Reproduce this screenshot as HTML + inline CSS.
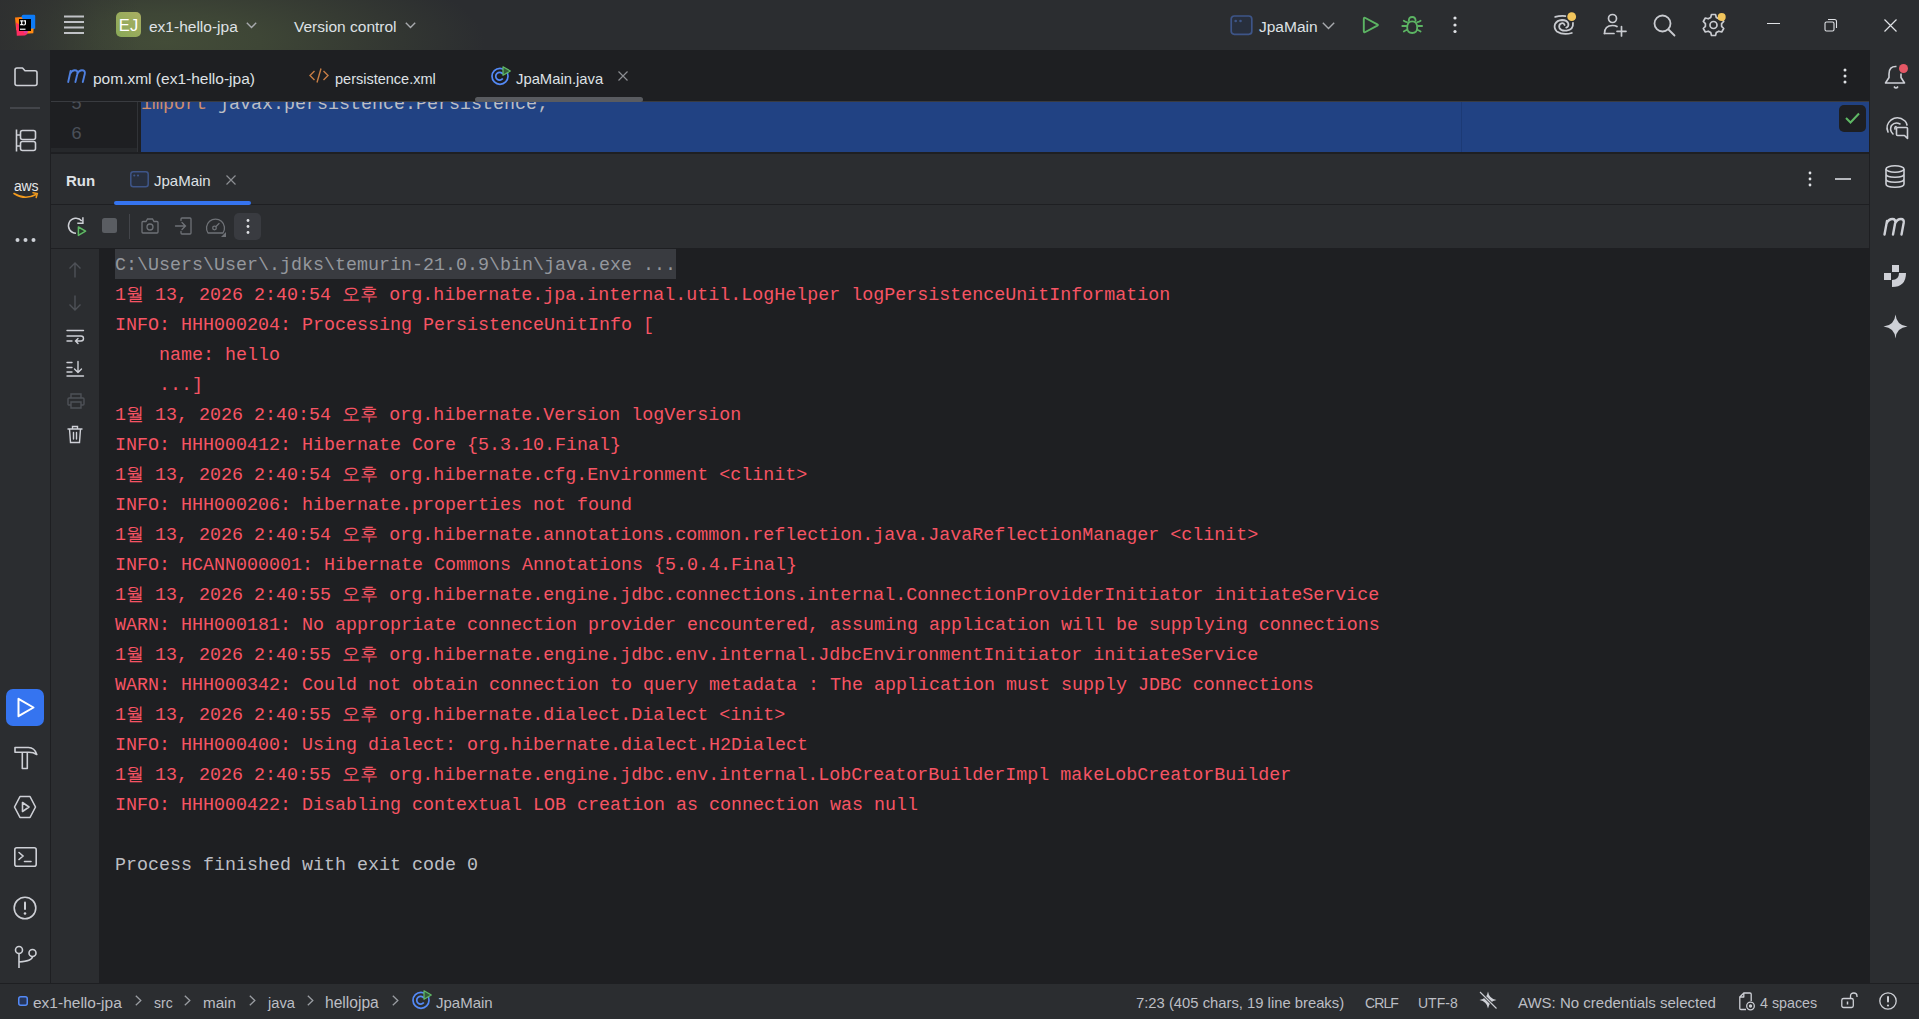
<!DOCTYPE html>
<html><head><meta charset="utf-8">
<style>
*{margin:0;padding:0;box-sizing:border-box}
html,body{width:1919px;height:1019px;overflow:hidden;background:#1E1F22;font-family:"Liberation Sans",sans-serif;color:#DFE1E5}
.a{position:absolute}
svg{position:absolute;overflow:visible}
#title{left:0;top:0;width:1919px;height:50px;background:linear-gradient(to right,rgba(46,47,48,0.92) 0px,rgba(46,47,48,0.6) 50px,rgba(46,47,48,0.2) 100px,rgba(46,47,48,0) 140px),radial-gradient(ellipse 320px 95px at 165px 42px,#434C38 0%,#3E4636 30%,#363B33 60%,#2B2D30 100%)}
.ui{font-size:15.5px;white-space:pre;line-height:20px}
#lstrip{left:0;top:50px;width:51px;height:933px;background:#2B2D30;border-right:1px solid #1E1F22}
#rstrip{left:1869px;top:50px;width:50px;height:933px;background:#2B2D30;border-left:1px solid #1E1F22}
#tabs{left:51px;top:50px;width:1818px;height:52px;background:#1E1F22;border-bottom:1px solid #393B40}
#editor{left:51px;top:102px;width:1818px;height:50px;background:#1E1F22;overflow:hidden}
#runhdr{left:51px;top:153px;width:1818px;height:52px;background:#2B2D30;border-top:1px solid #1E1F22;border-bottom:1px solid #1E1F22}
#runtb{left:51px;top:205px;width:1818px;height:44px;background:#2B2D30;border-bottom:1px solid #1E1F22}
#cgut{left:51px;top:249px;width:48px;height:734px;background:#2B2D30}
#console{left:99px;top:249px;width:1770px;height:734px;background:#1E1F22;overflow:hidden}
#status{left:0;top:983px;width:1919px;height:36px;background:#2B2D30;border-top:1px solid #1E1F22}
.mono{font-family:"Liberation Mono",monospace;font-size:18.333px;line-height:30px;white-space:pre}
.r{color:#F75464}
.k{display:inline-block;width:18.1px;text-align:left}
</style></head><body>
<div id="title" class="a">
<!-- IJ logo -->
<svg style="left:15px;top:15px" width="21" height="21" viewBox="0 0 21 21">
<path d="M6.5 1.5 Q6.8 -0.2 8.5 -0.2 L19 -0.3 Q20.2 -0.3 20.2 1 L20.2 13.5 L15 15.5 L6 7 Z" fill="#0D7BF8"/>
<path d="M0 2.5 L6.5 2 L9 6 L2.5 16 L1.2 15 Z" fill="#FF7F10"/>
<path d="M12 14.5 L18.6 13.2 L18.3 18.3 L10.5 18.8 Z" fill="#FF8A12"/>
<path d="M1 7.5 L9 13 L12.5 19 L10 20.6 L1.8 20.8 Z" fill="#FE2D62"/>
<path d="M8 12 L14 14.5 L12 18.5 L9 18 Z" fill="#DD3A9E"/>
<rect x="4" y="4" width="12" height="12" fill="#000"/>
<rect x="5" y="13.6" width="5.5" height="1.3" fill="#E8E8E8"/>
<path d="M5.2 5.9 H8.2 M6.7 5.9 V9.7 M5.2 9.7 H8.2 M8.6 5.9 H11 M10.4 5.9 V8.8 Q10.4 10 9 10 H8.4" stroke="#fff" stroke-width="1.2" fill="none"/>
</svg>
<!-- hamburger -->
<svg style="left:64px;top:15px" width="20" height="20" viewBox="0 0 20 20">
<path d="M0 1.5 H20 M0 7 H20 M0 12.5 H20 M0 18 H20" stroke="#C0C2C6" stroke-width="2"/>
</svg>
<!-- EJ badge -->
<div class="a" style="left:116px;top:12px;width:25px;height:25px;border-radius:5px;background:linear-gradient(45deg,#88A857,#9CAC5E 60%,#AAAE63)"></div>
<div class="a" style="left:116px;top:13px;width:25px;height:25px;font-size:16.5px;line-height:25px;text-align:center;color:#FFFFFF;letter-spacing:0.2px">EJ</div>
<div class="a ui" style="left:149px;top:17px">ex1-hello-jpa</div>
<svg style="left:246px;top:22px" width="11" height="7" viewBox="0 0 11 7"><path d="M0.8 0.8 L5.5 5.5 L10.2 0.8" stroke="#A8AAAE" stroke-width="1.4" fill="none"/></svg>
<div class="a ui" style="left:294px;top:17px">Version control</div>
<svg style="left:405px;top:22px" width="11" height="7" viewBox="0 0 11 7"><path d="M0.8 0.8 L5.5 5.5 L10.2 0.8" stroke="#A8AAAE" stroke-width="1.4" fill="none"/></svg>
<!-- run config -->
<svg style="left:1230px;top:15px" width="23" height="20" viewBox="0 0 23 20"><rect x="1.2" y="1" width="20.6" height="18.3" rx="3" fill="#282F3D" stroke="#3E5588" stroke-width="1.7"/><circle cx="5.7" cy="6" r="1.3" fill="#3E5588"/><circle cx="10.5" cy="6" r="1.3" fill="#3E5588"/></svg>
<div class="a ui" style="left:1259px;top:17px">JpaMain</div>
<svg style="left:1322px;top:22px" width="13" height="8" viewBox="0 0 13 8"><path d="M0.8 0.8 L6.5 6.5 L12.2 0.8" stroke="#A8AAAE" stroke-width="1.4" fill="none"/></svg>
<!-- play -->
<svg style="left:1362px;top:16px" width="18" height="19" viewBox="0 0 18 19"><path d="M1.8 3 Q1.8 1.2 3.4 2 L15.3 8.3 Q16.6 9 15.3 9.7 L3.4 16 Q1.8 16.8 1.8 15 Z" stroke="#5CB463" stroke-width="1.9" fill="none" stroke-linejoin="round"/></svg>
<!-- debug bug -->
<svg style="left:1400px;top:14px" width="24" height="22" viewBox="0 0 24 22">
<g stroke="#5CB463" stroke-width="1.8" fill="none" stroke-linecap="round">
<path d="M8.8 6.8 Q8.8 3 12.2 3 Q15.6 3 15.6 6.8"/>
<path d="M12.2 7.4 Q17.2 7.4 17.2 13.5 Q17.2 19 12.2 19 Q7.2 19 7.2 13.5 Q7.2 7.4 12.2 7.4 Z"/>
<path d="M3.8 6.7 Q5.5 7.9 7 8.2 M20.6 6.7 Q18.9 7.9 17.4 8.2 M2.3 12 H6.5 M22.1 12 H17.9 M3.8 17.5 Q5.5 16.3 7 15.9 M20.6 17.5 Q18.9 16.3 17.4 15.9"/>
</g></svg>
<!-- more -->
<svg style="left:1452px;top:15px" width="6" height="20" viewBox="0 0 6 20"><circle cx="3" cy="3" r="1.6" fill="#DFE1E5"/><circle cx="3" cy="10" r="1.6" fill="#DFE1E5"/><circle cx="3" cy="16.5" r="1.6" fill="#DFE1E5"/></svg>
<!-- AI galaxy -->
<svg style="left:1550px;top:10px" width="30" height="28" viewBox="0 0 30 28">
<g stroke="#C9CBD0" stroke-width="1.8" fill="none" stroke-linecap="round">
<path d="M5.2 6.9 Q10 5.6 15.5 6.1"/>
<path d="M21.8 23 Q13 25.5 6.8 21.5 Q3.6 18 5 14.2 Q7 10.2 12 10 Q17 10 18.3 13.5 Q19 16.8 16.2 17.6"/>
<path d="M23 12.8 Q23.6 19.5 16.5 20.6 Q11 21.2 9.4 17.8 Q8.5 14.4 11.5 13.3 Q13.8 12.8 14.6 15"/>
</g>
<circle cx="21.7" cy="6.7" r="5.3" fill="#2B2D30"/>
<circle cx="21.7" cy="6.7" r="4.4" fill="#F2C55C"/>
</svg>
<!-- person add -->
<svg style="left:1603px;top:13px" width="24" height="24" viewBox="0 0 24 24">
<g stroke="#C9CBD0" stroke-width="1.7" fill="none" stroke-linecap="round">
<circle cx="9.5" cy="5.5" r="4"/>
<path d="M1.5 20.5 Q1.5 12.5 9.5 12.5 Q12.5 12.5 14 13.5"/>
<path d="M1.5 20.5 H11"/>
<path d="M18.5 13.5 V23 M14 18.3 H23"/>
</g></svg>
<!-- search -->
<svg style="left:1653px;top:14px" width="23" height="23" viewBox="0 0 23 23">
<g stroke="#C9CBD0" stroke-width="1.8" fill="none" stroke-linecap="round"><circle cx="9.5" cy="9.5" r="8"/><path d="M15.5 15.5 L21.5 21.5"/></g></svg>
<!-- gear -->
<svg style="left:1702px;top:13px" width="24" height="24" viewBox="0 0 24 24">
<g stroke="#C9CBD0" stroke-width="1.7" fill="none" stroke-linejoin="round">
<path d="M9.5 2.5 H13.5 L14.3 5.4 L16.8 6.8 L19.7 6 L21.7 9.5 L19.6 11.7 V14.3 L21.7 16.5 L19.7 20 L16.8 19.2 L14.3 20.6 L13.5 23.5 H9.5 L8.7 20.6 L6.2 19.2 L3.3 20 L1.3 16.5 L3.4 14.3 V11.7 L1.3 9.5 L3.3 6 L6.2 6.8 L8.7 5.4 Z" transform="translate(0,-1)"/>
<circle cx="11.5" cy="12" r="3.5"/>
</g>
<circle cx="19.7" cy="4" r="4" fill="#F2C55C"/>
</svg>
<!-- window controls -->
<div class="a" style="left:1767px;top:23px;width:13px;height:1px;background:#DFE1E5"></div>
<svg style="left:1824px;top:18px" width="14" height="14" viewBox="0 0 14 14"><g stroke="#DFE1E5" stroke-width="1.1" fill="none"><rect x="1" y="4" width="9" height="9" rx="1.5"/><path d="M4 1.5 H10.5 Q12.5 1.5 12.5 3.5 V10"/></g></svg>
<svg style="left:1884px;top:19px" width="13" height="13" viewBox="0 0 13 13"><path d="M0.5 0.5 L12.5 12.5 M12.5 0.5 L0.5 12.5" stroke="#DFE1E5" stroke-width="1.2"/></svg>
</div>
<div id="lstrip" class="a">
<svg style="left:14px;top:17px" width="24" height="20" viewBox="0 0 24 20"><path d="M1 3 Q1 1 3 1 H8.5 L11 3.8 H21 Q23 3.8 23 5.8 V16.5 Q23 18.5 21 18.5 H3 Q1 18.5 1 16.5 Z" fill="none" stroke="#CED0D6" stroke-width="1.6" stroke-linejoin="round"/></svg>
<div class="a" style="left:10px;top:57px;width:30px;height:2px;background:#43454A"></div>
<svg style="left:15px;top:79px" width="22" height="23" viewBox="0 0 22 23"><g fill="none" stroke="#CED0D6" stroke-width="1.6"><path d="M1.5 0.5 V22.5 M1.5 6 H5.5 M1.5 17 H5.5"/><rect x="5.5" y="1.5" width="15" height="9" rx="2"/><rect x="5.5" y="12.5" width="15" height="9" rx="2"/></g></svg>
<div class="a" style="left:14px;top:128px;font-size:14px;line-height:16px;color:#E6E7EA;letter-spacing:-0.2px">aws</div>
<svg style="left:13px;top:141px" width="26" height="9" viewBox="0 0 26 9"><path d="M1 2.5 Q12 9.5 23 3.5" fill="none" stroke="#F29A1D" stroke-width="1.6" stroke-linecap="round"/><path d="M20 1.8 L24.3 2.6 L23.2 6.5" fill="none" stroke="#F29A1D" stroke-width="1.5" stroke-linecap="round"/></svg>
<svg style="left:15px;top:187px" width="22" height="6" viewBox="0 0 22 6"><circle cx="2.5" cy="3" r="2" fill="#CED0D6"/><circle cx="10.5" cy="3" r="2" fill="#CED0D6"/><circle cx="18.5" cy="3" r="2" fill="#CED0D6"/></svg>
<div class="a" style="left:6px;top:639px;width:38px;height:37px;border-radius:7px;background:#3574F0"></div>
<svg style="left:17px;top:647px" width="18" height="21" viewBox="0 0 18 21"><path d="M1.5 1.8 L16.5 10.5 L1.5 19.2 Z" fill="none" stroke="#FFFFFF" stroke-width="2" stroke-linejoin="round"/></svg>
<svg style="left:14px;top:696px" width="24" height="24" viewBox="0 0 24 24"><g fill="none" stroke="#CED0D6" stroke-width="1.6" stroke-linejoin="round"><path d="M1 1.5 H14.5 Q20.5 1.5 22.8 8.5 Q19.5 6.2 15 6.2 H1 Z"/><path d="M8.3 6.2 V22.5 H13.3 V6.2"/></g></svg>
<svg style="left:13px;top:745px" width="24" height="24" viewBox="0 0 24 24"><g fill="none" stroke="#CED0D6" stroke-width="1.6" stroke-linejoin="round"><path d="M7 1.5 H17 L22.5 12 L17 22.5 H7 L1.5 12 Z"/><path d="M9.5 7.5 L16 12 L9.5 16.5 Z"/></g></svg>
<svg style="left:14px;top:797px" width="23" height="21" viewBox="0 0 23 21"><g fill="none" stroke="#CED0D6" stroke-width="1.6"><rect x="0.8" y="0.8" width="21.4" height="18.4" rx="2"/><path d="M5 5.5 L9 9 L5 12.5 M10.5 14.5 H17" stroke-linecap="round"/></g></svg>
<svg style="left:13px;top:846px" width="24" height="24" viewBox="0 0 24 24"><g fill="none" stroke="#CED0D6" stroke-width="1.6"><circle cx="12" cy="12" r="10.8"/></g><rect x="11" y="5.5" width="2" height="8.5" rx="1" fill="#CED0D6"/><circle cx="12" cy="17.5" r="1.3" fill="#CED0D6"/></svg>
<svg style="left:14px;top:895px" width="24" height="24" viewBox="0 0 24 24"><g fill="none" stroke="#CED0D6" stroke-width="1.6"><circle cx="5" cy="5" r="3.5"/><circle cx="18.5" cy="8" r="3.5"/><path d="M5 8.5 V23 M18.5 11.5 Q18.5 16 5 17"/></g></svg>
</div>
<div id="rstrip" class="a">
<svg style="left:13px;top:13px" width="26" height="26" viewBox="0 0 26 26"><g fill="none" stroke="#CED0D6" stroke-width="1.6" stroke-linejoin="round"><path d="M13.5 3.5 Q6 3 6 11 V14.5 L2.5 20 H21.5 L18 14.5 V10.5"/><path d="M11 23.5 Q12 25 13 25 Q14 25 15 23.5"/></g><circle cx="20.5" cy="5.5" r="4.5" fill="#E55765"/></svg>
<svg style="left:15px;top:66px" width="25" height="24" viewBox="0 0 25 24"><g fill="none" stroke="#CED0D6" stroke-width="1.6" stroke-linecap="round" stroke-linejoin="round"><path d="M3 16 Q0 9 6 4 Q13 -1 20 5 Q21.5 6.5 22 9"/><path d="M8 18 Q4 14 6.5 9.5 Q10 5.5 15 8"/><path d="M10 13 Q9.5 11 11 10.5"/><path d="M11.5 12.5 Q11.5 11.5 12.5 11.5 H21.5 Q22.5 11.5 22.5 12.5 V22.5 L19.5 19.5 H12.5 Q11.5 19.5 11.5 18.5 Z"/></g></svg>
<svg style="left:15px;top:115px" width="20" height="23"  viewBox="0 0 20 23"><g fill="none" stroke="#CED0D6" stroke-width="1.6"><ellipse cx="10" cy="4" rx="9" ry="3.2"/><path d="M1 4 V19 Q1 22.2 10 22.2 Q19 22.2 19 19 V4 M1 9 Q1 12.2 10 12.2 Q19 12.2 19 9 M1 14 Q1 17.2 10 17.2 Q19 17.2 19 14"/></g></svg>
<svg style="left:13px;top:167px" width="26" height="19" viewBox="0 0 26 19"><path d="M1.5 17.5 L4 4 M3.6 6.5 Q5.5 2 9.5 2 Q12.8 2 12.2 5.8 L10 17.5 M12 6.5 Q14 2 18 2 Q21.3 2 20.7 5.8 L18.5 17.5" fill="none" stroke="#CED0D6" stroke-width="2.4" stroke-linecap="round"/></svg>
<svg style="left:13px;top:214px" width="24" height="24" viewBox="0 0 24 24"><g fill="#CED0D6"><rect x="9" y="1" width="7" height="7"/><rect x="1" y="9" width="7" height="7"/><path d="M16 9 H23 Q23 23 9 23 V16 Q16 16 16 9 Z"/></g></svg>
<svg style="left:13px;top:264px" width="25" height="25" viewBox="0 0 25 25"><path d="M12.5 0.5 Q13.5 11.5 24.5 12.5 Q13.5 13.5 12.5 24.5 Q11.5 13.5 0.5 12.5 Q11.5 11.5 12.5 0.5 Z" fill="#CED0D6"/></svg>
</div>
<div id="tabs" class="a">
<svg style="left:15px;top:19px" width="21" height="15" viewBox="0 0 21 15"><path d="M2.2 13 L4.6 2 M4 4.8 Q5.8 1.2 8.8 1.2 Q12 1.2 11.4 4.8 L9.4 13 M11.2 4.8 Q13 1.2 16 1.2 Q19.4 1.2 18.8 4.8 L16.8 13" fill="none" stroke="#4F80E0" stroke-width="1.9" stroke-linecap="round"/></svg>
<div class="a ui" style="left:42px;top:19px">pom.xml (ex1-hello-jpa)</div>
<svg style="left:258px;top:18px" width="20" height="15" viewBox="0 0 20 15"><g stroke="#C77D45" stroke-width="1.4" fill="none"><path d="M5.5 3 L1 7.5 L5.5 12 M14.5 3 L19 7.5 L14.5 12 M12 0.5 L8 14.5"/></g></svg>
<div class="a ui" style="left:284px;top:19px;font-size:14.5px">persistence.xml</div>
<svg style="left:440px;top:16px" width="20" height="19" viewBox="0 0 20 19"><circle cx="9" cy="10.3" r="8" fill="none" stroke="#548AF7" stroke-width="1.7"/><path d="M11.8 8 A3.9 3.9 0 1 0 11.8 12.6" fill="none" stroke="#548AF7" stroke-width="1.7"/><path d="M12 0.8 L19.3 5 L12 9.2 Z" fill="#345A3A" stroke="#5FB865" stroke-width="1.3" stroke-linejoin="round"/></svg>
<div class="a ui" style="left:465px;top:19px;font-size:14.8px">JpaMain.java</div>
<svg style="left:567px;top:21px" width="10" height="10" viewBox="0 0 10 10"><path d="M0.5 0.5 L9.5 9.5 M9.5 0.5 L0.5 9.5" stroke="#8C8E92" stroke-width="1.2"/></svg>
<div class="a" style="left:424px;top:47px;width:168px;height:5px;border-radius:3px;background:#595B60"></div>
<svg style="left:1791px;top:18px" width="6" height="16" viewBox="0 0 6 16"><circle cx="3" cy="2" r="1.5" fill="#DFE1E5"/><circle cx="3" cy="8" r="1.5" fill="#DFE1E5"/><circle cx="3" cy="14" r="1.5" fill="#DFE1E5"/></svg>
</div>
<div id="editor" class="a">
<div class="a" style="left:0;top:0;width:86px;height:46px;background:#1E1F22"></div>
<div class="a" style="left:0;top:46px;width:86px;height:5px;background:#26282B"></div>
<div class="a" style="left:86px;top:0;width:1px;height:51px;background:#313337"></div>
<div class="a" style="left:90px;top:0;width:1728px;height:51px;background:#214283"></div>
<div class="a" style="left:1410px;top:0;width:1px;height:51px;background:#1C3A75"></div>
<div class="a mono" style="left:20px;top:-12px;color:#4B5059">5</div>
<div class="a mono" style="left:20px;top:18px;color:#4B5059">6</div>
<div class="a mono" style="left:90px;top:-12px;color:#BCBEC4"><span style="color:#CF8E6D">import</span> javax.persistence.Persistence;</div>
<div class="a" style="left:1788px;top:3px;width:27px;height:27px;border-radius:5px;background:#1E1F22"></div>
<svg style="left:1794px;top:10px" width="15" height="12" viewBox="0 0 15 12"><path d="M1 6 L5.5 10.5 L14 1.5" stroke="#5FB865" stroke-width="2" fill="none"/></svg>
</div>
<div id="runhdr" class="a">
<div class="a ui" style="left:15px;top:17px;font-weight:bold;font-size:15px">Run</div>
<svg style="left:79px;top:17px" width="19" height="17" viewBox="0 0 19 17"><rect x="0.8" y="0.8" width="17.4" height="14.9" rx="2.5" fill="#282F3D" stroke="#3E5588" stroke-width="1.5"/><circle cx="4.3" cy="4.5" r="1.1" fill="#3E5588"/><circle cx="8" cy="4.5" r="1.1" fill="#3E5588"/></svg>
<div class="a ui" style="left:103px;top:17px;font-size:15px">JpaMain</div>
<svg style="left:175px;top:21px" width="10" height="10" viewBox="0 0 10 10"><path d="M0.5 0.5 L9.5 9.5 M9.5 0.5 L0.5 9.5" stroke="#8C8E92" stroke-width="1.2"/></svg>
<div class="a" style="left:63px;top:47px;width:137px;height:4px;border-radius:2px;background:#3574F0"></div>
<svg style="left:1756px;top:17px" width="6" height="16" viewBox="0 0 6 16"><circle cx="3" cy="2" r="1.4" fill="#DFE1E5"/><circle cx="3" cy="8" r="1.4" fill="#DFE1E5"/><circle cx="3" cy="14" r="1.4" fill="#DFE1E5"/></svg>
<div class="a" style="left:1784px;top:24px;width:16px;height:2px;background:#B5B7BC"></div>
</div>
<div id="runtb" class="a">
<svg style="left:9px;top:5px" width="40" height="32" viewBox="0 0 40 32"><g fill="none" stroke="#CED0D6" stroke-width="1.5"><path d="M16 23.2 A7.5 7.5 0 1 1 21.8 11"/><path d="M22.9 7.2 V13.2 H17.3"/></g><path d="M18.4 17 L25.6 21.2 L18.4 25.4 Z" fill="#253A28" stroke="#5FB865" stroke-width="1.5" stroke-linejoin="round"/></svg>
<div class="a" style="left:51px;top:13px;width:15px;height:15px;border-radius:2.5px;background:#5A5D62"></div>
<div class="a" style="left:78px;top:9px;width:1px;height:25px;background:#43454A"></div>
<svg style="left:90px;top:13px" width="18" height="16" viewBox="0 0 18 16"><g fill="none" stroke="#6F7277" stroke-width="1.3"><path d="M1 4.5 Q1 3.5 2 3.5 H5 L6.5 1 H11.5 L13 3.5 H16 Q17 3.5 17 4.5 V14 Q17 15 16 15 H2 Q1 15 1 14 Z"/><circle cx="9" cy="9" r="3"/></g></svg>
<svg style="left:124px;top:12px" width="17" height="18" viewBox="0 0 17 18"><g fill="none" stroke="#6F7277" stroke-width="1.3" stroke-linecap="round"><path d="M6 3.5 V2 Q6 1 7 1 H15 Q16 1 16 2 V16 Q16 17 15 17 H7 Q6 17 6 16 V14.5"/><path d="M0.5 9 H10 M7 5.5 L10.5 9 L7 12.5"/></g></svg>
<svg style="left:154px;top:13px" width="22" height="20" viewBox="0 0 22 20"><g fill="none" stroke="#6F7277" stroke-width="1.3" stroke-linecap="round"><path d="M3 15 A9 9 0 1 1 18 15 Z" stroke-linejoin="round"/><circle cx="9.5" cy="10" r="1.8"/><path d="M11 8.5 L14 5.5"/></g><path d="M21 14 L21 19 L16 19 Z" fill="#6F7277"/></svg>
<div class="a" style="left:183px;top:8px;width:27px;height:27px;border-radius:5px;background:#393B40"></div>
<svg style="left:194px;top:14px" width="6" height="15" viewBox="0 0 6 15"><circle cx="3" cy="1.5" r="1.4" fill="#DFE1E5"/><circle cx="3" cy="7.5" r="1.4" fill="#DFE1E5"/><circle cx="3" cy="13.5" r="1.4" fill="#DFE1E5"/></svg>
</div>
<div id="cgut" class="a">
<svg style="left:16px;top:13px" width="16" height="16" viewBox="0 0 16 16"><path d="M8 15.5 V1 M2.5 6.5 L8 1 L13.5 6.5" fill="none" stroke="#4E5157" stroke-width="1.4"/></svg>
<svg style="left:16px;top:46px" width="16" height="16" viewBox="0 0 16 16"><path d="M8 0.5 V15 M2.5 9.5 L8 15 L13.5 9.5" fill="none" stroke="#4E5157" stroke-width="1.4"/></svg>
<svg style="left:15px;top:80px" width="19" height="16" viewBox="0 0 19 16"><g fill="none" stroke="#CED0D6" stroke-width="1.4" stroke-linecap="round"><path d="M1 1.5 H17.5 M1 7 H15 Q17.5 7 17.5 9.5 Q17.5 12 15 12 H10 M1 12 H6 M12 9.5 L9.5 12 L12 14.5"/></g></svg>
<svg style="left:15px;top:112px" width="19" height="16" viewBox="0 0 19 16"><g fill="none" stroke="#CED0D6" stroke-width="1.4" stroke-linecap="round"><path d="M1 1.5 H6 M1 6.5 H6 M1 11 H6 M1 15 H17.5 M12 0.5 V11.5 M8.5 8 L12 11.5 L15.5 8"/></g></svg>
<svg style="left:16px;top:144px" width="18" height="16" viewBox="0 0 18 16"><g fill="none" stroke="#4E5157" stroke-width="1.4"><path d="M4 5 V1 H14 V5 M4 12 H1.5 Q1 12 1 11 V6 Q1 5 2 5 H16 Q17 5 17 6 V11 Q17 12 16 12 H14 M4 9 H14 V15 H4 Z"/></g></svg>
<svg style="left:16px;top:176px" width="16" height="19" viewBox="0 0 16 19"><g fill="none" stroke="#CED0D6" stroke-width="1.4" stroke-linecap="round"><path d="M1 4 H15 M5.5 4 V1.5 H10.5 V4 M2.5 4 L3.5 17.5 H12.5 L13.5 4 M6.5 7.5 V14 M9.5 7.5 V14"/></g></svg>
</div>
<div id="console" class="a">
<div class="a" style="left:16px;top:0px;width:561px;height:30px;background:#393B40"></div>
<div class="a mono" style="left:16px;top:2px;color:#94979D">C:\Users\User\.jdks\temurin-21.0.9\bin\java.exe ...</div>
<div class="a mono r" style="left:16px;top:32px">1<span class="k">월</span> 13, 2026 2:40:54 <span class="k">오</span><span class="k">후</span> org.hibernate.jpa.internal.util.LogHelper logPersistenceUnitInformation</div>
<div class="a mono r" style="left:16px;top:62px">INFO: HHH000204: Processing PersistenceUnitInfo [</div>
<div class="a mono r" style="left:16px;top:92px">    name: hello</div>
<div class="a mono r" style="left:16px;top:122px">    ...]</div>
<div class="a mono r" style="left:16px;top:152px">1<span class="k">월</span> 13, 2026 2:40:54 <span class="k">오</span><span class="k">후</span> org.hibernate.Version logVersion</div>
<div class="a mono r" style="left:16px;top:182px">INFO: HHH000412: Hibernate Core {5.3.10.Final}</div>
<div class="a mono r" style="left:16px;top:212px">1<span class="k">월</span> 13, 2026 2:40:54 <span class="k">오</span><span class="k">후</span> org.hibernate.cfg.Environment &lt;clinit&gt;</div>
<div class="a mono r" style="left:16px;top:242px">INFO: HHH000206: hibernate.properties not found</div>
<div class="a mono r" style="left:16px;top:272px">1<span class="k">월</span> 13, 2026 2:40:54 <span class="k">오</span><span class="k">후</span> org.hibernate.annotations.common.reflection.java.JavaReflectionManager &lt;clinit&gt;</div>
<div class="a mono r" style="left:16px;top:302px">INFO: HCANN000001: Hibernate Commons Annotations {5.0.4.Final}</div>
<div class="a mono r" style="left:16px;top:332px">1<span class="k">월</span> 13, 2026 2:40:55 <span class="k">오</span><span class="k">후</span> org.hibernate.engine.jdbc.connections.internal.ConnectionProviderInitiator initiateService</div>
<div class="a mono r" style="left:16px;top:362px">WARN: HHH000181: No appropriate connection provider encountered, assuming application will be supplying connections</div>
<div class="a mono r" style="left:16px;top:392px">1<span class="k">월</span> 13, 2026 2:40:55 <span class="k">오</span><span class="k">후</span> org.hibernate.engine.jdbc.env.internal.JdbcEnvironmentInitiator initiateService</div>
<div class="a mono r" style="left:16px;top:422px">WARN: HHH000342: Could not obtain connection to query metadata : The application must supply JDBC connections</div>
<div class="a mono r" style="left:16px;top:452px">1<span class="k">월</span> 13, 2026 2:40:55 <span class="k">오</span><span class="k">후</span> org.hibernate.dialect.Dialect &lt;init&gt;</div>
<div class="a mono r" style="left:16px;top:482px">INFO: HHH000400: Using dialect: org.hibernate.dialect.H2Dialect</div>
<div class="a mono r" style="left:16px;top:512px">1<span class="k">월</span> 13, 2026 2:40:55 <span class="k">오</span><span class="k">후</span> org.hibernate.engine.jdbc.env.internal.LobCreatorBuilderImpl makeLobCreatorBuilder</div>
<div class="a mono r" style="left:16px;top:542px">INFO: HHH000422: Disabling contextual LOB creation as connection was null</div>
<div class="a mono" style="left:16px;top:572px;color:#BCBEC4"></div>
<div class="a mono" style="left:16px;top:602px;color:#BCBEC4">Process finished with exit code 0</div>
</div>
<div id="status" class="a">
<svg style="left:18px;top:12px" width="10" height="10" viewBox="0 0 10 10"><rect x="0.75" y="0.75" width="8.5" height="8.5" rx="2" fill="#27365A" stroke="#548AF7" stroke-width="1.5"/></svg>
<div class="a" style="left:33px;top:9px;font-size:15.5px;line-height:20px;white-space:pre;color:#BCBEC4;letter-spacing:0px">ex1-hello-jpa</div>
<svg style="left:135px;top:11px" width="7" height="11" viewBox="0 0 7 11"><path d="M0.8 0.8 L5.8 5.5 L0.8 10.2" fill="none" stroke="#9A9DA2" stroke-width="1.3"/></svg>
<div class="a" style="left:154px;top:9px;font-size:14px;line-height:20px;white-space:pre;color:#BCBEC4;letter-spacing:0px">src</div>
<svg style="left:184px;top:11px" width="7" height="11" viewBox="0 0 7 11"><path d="M0.8 0.8 L5.8 5.5 L0.8 10.2" fill="none" stroke="#9A9DA2" stroke-width="1.3"/></svg>
<div class="a" style="left:203px;top:9px;font-size:15.2px;line-height:20px;white-space:pre;color:#BCBEC4;letter-spacing:0px">main</div>
<svg style="left:249px;top:11px" width="7" height="11" viewBox="0 0 7 11"><path d="M0.8 0.8 L5.8 5.5 L0.8 10.2" fill="none" stroke="#9A9DA2" stroke-width="1.3"/></svg>
<div class="a" style="left:268px;top:9px;font-size:14.7px;line-height:20px;white-space:pre;color:#BCBEC4;letter-spacing:0px">java</div>
<svg style="left:307px;top:11px" width="7" height="11" viewBox="0 0 7 11"><path d="M0.8 0.8 L5.8 5.5 L0.8 10.2" fill="none" stroke="#9A9DA2" stroke-width="1.3"/></svg>
<div class="a" style="left:325px;top:9px;font-size:15.6px;line-height:20px;white-space:pre;color:#BCBEC4;letter-spacing:0px">hellojpa</div>
<svg style="left:392px;top:11px" width="7" height="11" viewBox="0 0 7 11"><path d="M0.8 0.8 L5.8 5.5 L0.8 10.2" fill="none" stroke="#9A9DA2" stroke-width="1.3"/></svg>
<svg style="left:412px;top:6px" width="20" height="19" viewBox="0 0 20 19"><circle cx="9" cy="10.3" r="8" fill="none" stroke="#548AF7" stroke-width="1.7"/><path d="M11.8 8 A3.9 3.9 0 1 0 11.8 12.6" fill="none" stroke="#548AF7" stroke-width="1.7"/><path d="M12 0.8 L19.3 5 L12 9.2 Z" fill="#345A3A" stroke="#5FB865" stroke-width="1.3" stroke-linejoin="round"/></svg>
<div class="a" style="left:436px;top:9px;font-size:15px;line-height:20px;white-space:pre;color:#BCBEC4;letter-spacing:0px">JpaMain</div>
<div class="a" style="left:1136px;top:9px;font-size:14.8px;line-height:20px;white-space:pre;color:#BCBEC4;letter-spacing:0px">7:23 (405 chars, 19 line breaks)</div>
<div class="a" style="left:1365px;top:9px;font-size:14px;line-height:20px;white-space:pre;color:#BCBEC4;letter-spacing:-0.9px">CRLF</div>
<div class="a" style="left:1418px;top:9px;font-size:14px;line-height:20px;white-space:pre;color:#BCBEC4;letter-spacing:0px">UTF-8</div>
<svg style="left:1479px;top:7px" width="19" height="19" viewBox="0 0 19 19"><path d="M9 0.5 Q10 7.5 17.5 9 Q10 10.5 9 17.5 Q8 10.5 0.5 9 Q8 7.5 9 0.5 Z" fill="#CED0D6"/><path d="M1 1 L17.5 17.5" stroke="#2B2D30" stroke-width="3"/><path d="M1 1 L17.5 17.5" stroke="#CED0D6" stroke-width="1.1"/></svg>
<div class="a" style="left:1518px;top:9px;font-size:15px;line-height:20px;white-space:pre;color:#BCBEC4;letter-spacing:0px">AWS: No credentials selected</div>
<svg style="left:1739px;top:8px" width="17" height="19" viewBox="0 0 17 19"><g fill="none" stroke="#CED0D6" stroke-width="1.3" stroke-linejoin="round"><path d="M7 17.5 H2 Q0.8 17.5 0.8 16.3 V5 L4.8 1 H11 Q12.2 1 12.2 2.2 V9"/><path d="M0.8 5 H4.8 V1"/><circle cx="11.5" cy="14" r="3.8"/><circle cx="11.5" cy="14" r="1" fill="#CED0D6"/></g></svg>
<div class="a" style="left:1760px;top:9px;font-size:14.3px;line-height:20px;white-space:pre;color:#BCBEC4;letter-spacing:0px">4 spaces</div>
<svg style="left:1841px;top:8px" width="18" height="17" viewBox="0 0 18 17"><g fill="none" stroke="#CED0D6" stroke-width="1.3"><rect x="0.8" y="6.5" width="11.5" height="9" rx="1.8"/><path d="M9.5 6.5 V4 Q9.5 1 12.8 1 Q16 1 16 4 V5"/><path d="M6.5 9.5 V12.5" stroke-width="1.5"/></g></svg>
<svg style="left:1879px;top:8px" width="19" height="19" viewBox="0 0 19 19"><circle cx="9" cy="9" r="8.2" fill="none" stroke="#CED0D6" stroke-width="1.3"/><rect x="8" y="4" width="2" height="6.5" rx="1" fill="#CED0D6"/><circle cx="9" cy="13.5" r="1.1" fill="#CED0D6"/></svg>
</div>
</body></html>
